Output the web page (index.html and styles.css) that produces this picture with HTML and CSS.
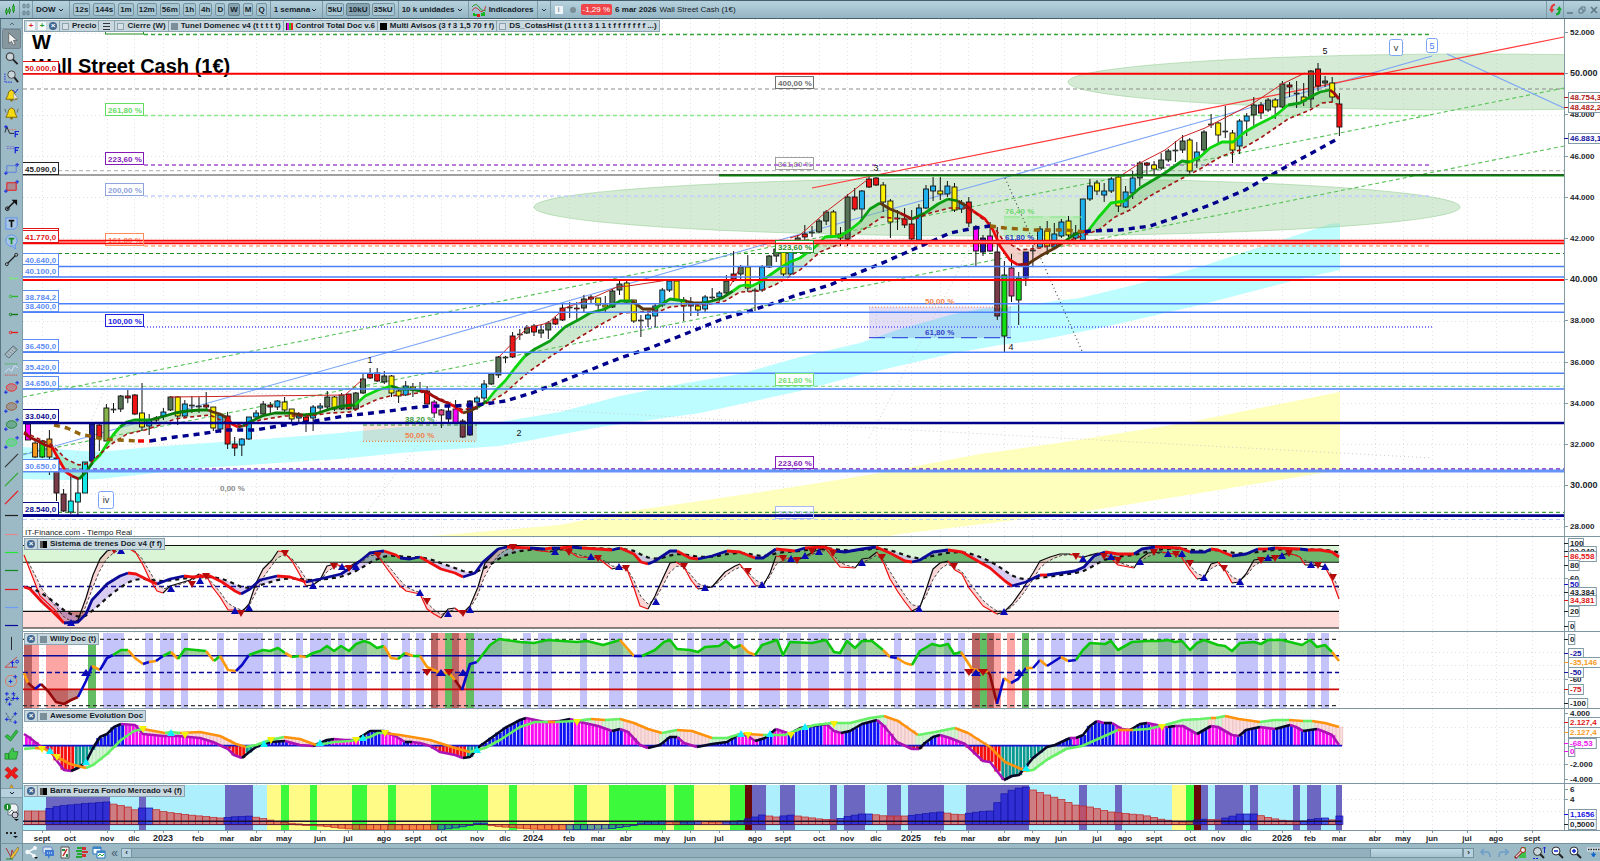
FILE: index.html
```html
<!DOCTYPE html>
<html lang="es">
<head>
<meta charset="utf-8">
<title>Wall Street Cash (1€)</title>
<link rel="stylesheet" href="styles.css">
</head>
<body>
<header class="toolbar">
  <button class="tool-icon" aria-label="Gráfico"><svg width="12" height="12" viewBox="0 0 12 12"><path d="M2.500 4v7M5.500 3v7M9.500 0v9" stroke="#17801b"/><path d="M1.500 6h2v3h-2zM4.500 5h2v3h-2zM8.500 2h2v5h-2z" fill="#3cb83f" stroke="#17801b" stroke-width=".5"/></svg></button>
  <button class="tool-icon grip" aria-label="Vincular"><svg width="8" height="13" viewBox="0 0 8 13"><g fill="none" stroke="#5d7683"><rect x="1" y="1" width="2" height="4" rx="1"/><rect x="5" y="1" width="2" height="4" rx="1"/><rect x="1" y="8" width="2" height="4" rx="1"/><rect x="5" y="8" width="2" height="4" rx="1"/></g></svg></button>
  <div class="group"><select class="pick w-symbol" aria-label="Valor"><option>DOW</option></select></div>
  <div class="group">
    <button class="tf">12s</button><button class="tf">144s</button><button class="tf">1m</button><button class="tf">12m</button><button class="tf">56m</button><button class="tf">1h</button><button class="tf">4h</button><button class="tf">D</button><button class="tf on">W</button><button class="tf">M</button><button class="tf">Q</button>
  </div>
  <div class="group"><select class="pick w-frame" aria-label="Periodo"><option>1 semana</option></select></div>
  <div class="group near"><button class="tf">5kU</button><button class="tf on">10kU</button><button class="tf">35kU</button></div>
  <div class="group"><select class="pick w-units" aria-label="Unidades"><option>10 k unidades</option></select></div>
  <div class="group"><button class="plain"><svg width="14" height="14" viewBox="0 0 14 14"><path d="M0 4q4-5 7 0t7 3" fill="none" stroke="#2a9a2f"/><path d="M0 8q3-6 7-1t7-4" fill="none" stroke="#c03a3a"/><path d="M1 13v-3h2v3M3 13v-2h2v2M9 13v-3h2v3M11 13v-4h2v4" fill="#12b51c"/><path d="M5 11h3v3H5z" fill="#d22"/></svg>Indicadores</button></div>
  <div class="group"><button class="plain" aria-label="Más indicadores"><svg width="6" height="4" viewBox="0 0 6 4"><path d="M1 1l2 2 2-2" fill="none" stroke="#234"/></svg></button></div>
  <div class="quote"><span class="info">i</span><span class="dot"></span><span class="change">-1,29 %</span><b>6 mar 2026</b><span>Wall Street Cash (1€)</span></div>
  <div class="window-tools">
    <button class="tool-icon sync" aria-label="Sincronizar"><svg width="13" height="13" viewBox="0 0 13 13"><path d="M6 1.500Q2 2 2.500 7" fill="none" stroke="#e53a3a" stroke-width="2.200"/><path d="M0 6h5.500L2.800 10z" fill="#e53a3a"/><path d="M7 11.500q4-.5 3.500-5.500" fill="none" stroke="#13a92b" stroke-width="2.200"/><path d="M7.500 7H13l-2.700-4z" fill="#13a92b"/></svg></button>
    <button class="win" aria-label="Minimizar"><svg width="8" height="8" viewBox="0 0 8 8"><path d="M1 7h6" stroke="#5c7683" stroke-width="1.500"/></svg></button>
    <button class="win" aria-label="Restaurar"><svg width="8" height="8" viewBox="0 0 8 8"><path d="M1 3h4v4H1zM3 3V1h4v4H5" fill="none" stroke="#5c7683"/></svg></button>
    <button class="win" aria-label="Cerrar"><svg width="8" height="8" viewBox="0 0 8 8"><path d="M1 1l6 6M7 1L1 7" stroke="#5c7683" stroke-width="1.500"/></svg></button>
  </div>
</header>

<div class="middle">
  <nav class="sidebar" aria-label="Herramientas de dibujo">
    <button class="side-head" aria-label="Subir"><svg width="6" height="4" viewBox="0 0 6 4"><path d="M1 3l2-2 2 2" fill="none" stroke="#567"/></svg></button>
    <div class="tools" id="tools"></div>
    <button class="side-more" aria-label="Bajar"><svg width="6" height="4" viewBox="0 0 6 4"><path d="M1 1l2 2 2-2" fill="none" stroke="#123"/></svg></button>
    <button class="side-doc" aria-label="Plantillas"><svg width="16" height="18" viewBox="0 0 16 18"><path d="M6 1h6l2 3v8H4V3z" fill="#eef2f4" stroke="#678"/><circle cx="3.500" cy="4" r="3.500" fill="#1d8b2d"/><path d="M3.500 2v4" stroke="#fff"/><path d="M5 10l3-3 3 3 3-3" fill="none" stroke="#788"/><circle cx="11" cy="12" r="3" fill="#ccd" stroke="#333"/><path d="M10 16h5l-2.500 2z" fill="#111"/></svg></button>
    <button class="side-dots" aria-label="Más"><svg width="14" height="8" viewBox="0 0 14 8"><path d="M1 2h2M5 2h2M9 2h2" stroke="#222" stroke-width="2"/><path d="M8 5h5l-2.500 2z" fill="#111"/></svg></button>
  </nav>

  <main class="charts">
    <section class="panel">
      <div class="legend">
        <span class="tab actions"><button class="mini red" aria-label="Bajar">+</button><button class="mini green" aria-label="Subir">+</button><button class="mini close" aria-label="Cerrar">×</button></span>
        <span class="tab"><i class="swatch hollow"></i>Precio</span>
        <span class="tab list"><i class="lines"></i></span>
        <span class="tab"><i class="swatch hollow"></i>Cierre (W)</span>
        <span class="tab"><i class="swatch slate"></i>Tunel Domenec v4 (t t t t t)</span>
        <span class="tab"><i class="swatch multi"></i>Control Total Doc v.6</span>
        <span class="tab"><i class="swatch black"></i>Multi Avisos (3 f 3 1,5 70 f f)</span>
        <span class="tab"><i class="swatch hollow"></i>DS_CotasHist (1 t t t 3 1 1 t f f f f f f f ...)</span>
      </div>
      <svg id="price" class="plot" viewBox="23 19 1577 518"></svg>
    </section>
    <section class="panel">
      <div class="legend"><span class="tab"><button class="mini close" aria-label="Cerrar">×</button></span><span class="tab"><i class="swatch half"></i>Sistema de trenes Doc v4 (f f)</span></div>
      <svg id="trains" class="plot" viewBox="23 537 1577 95"></svg>
    </section>
    <section class="panel">
      <div class="legend"><span class="tab"><button class="mini close" aria-label="Cerrar">×</button></span><span class="tab"><i class="swatch slate"></i>Willy Doc (t)</span></div>
      <svg id="willy" class="plot" viewBox="23 632 1577 77"></svg>
    </section>
    <section class="panel">
      <div class="legend"><span class="tab"><button class="mini close" aria-label="Cerrar">×</button></span><span class="tab"><i class="swatch slate"></i>Awesome Evolution Doc</span></div>
      <svg id="awesome" class="plot" viewBox="23 709 1577 75"></svg>
    </section>
    <section class="panel">
      <div class="legend"><span class="tab"><button class="mini close" aria-label="Cerrar">×</button></span><span class="tab"><i class="swatch half"></i>Barra Fuerza Fondo Mercado v4 (f)</span></div>
      <svg id="force" class="plot" viewBox="23 784 1577 47"></svg>
    </section>
    <svg id="months" class="plot" viewBox="23 831 1577 12"></svg>
  </main>
</div>

<footer class="bottom">
  <button class="corner" aria-label="Dibujar"><svg width="14" height="14" viewBox="0 0 14 14"><path d="M1 2l5 9 1-7 3 6" fill="none" stroke="#a33"/><path d="M13 1L6 10l-1 3 3-1 6-9z" fill="#f3c433" stroke="#654" stroke-width=".6"/><path d="M1 13h7" stroke="#2a8a2a"/></svg></button>
  <div class="shortcuts">
    <button aria-label="Compartir"><svg width="13" height="13" viewBox="0 0 13 13"><path d="M10 2L3 6l7 4" fill="none" stroke="#f4f8fa" stroke-width="1.500"/><circle cx="10" cy="2" r="2" fill="#f4f8fa"/><circle cx="2.500" cy="6" r="2.200" fill="#f4f8fa"/><circle cx="9" cy="10" r="2" fill="#f4f8fa"/><path d="M9 11h4l-2 2z" fill="#111"/></svg></button>
    <button aria-label="Mensajes"><svg width="13" height="13" viewBox="0 0 13 13"><rect x="1" y="1" width="9" height="6" rx="1" fill="#d7e4f2" stroke="#68c"/><path d="M3 4h9v6H8l-2 3v-3H3z" fill="#3e7ad3"/><path d="M5 7h1M7 7h1M9 7h1" stroke="#fff"/></svg></button>
    <button aria-label="Informe"><svg width="12" height="13" viewBox="0 0 12 13"><path d="M2 1h8v11H2z" fill="#f4f4f4" stroke="#555"/><path d="M4 10l4-7" stroke="#c22" stroke-width="1.500"/><path d="M3 3h3v2H3zM7 8h2v3H7z" fill="#284"/></svg></button>
    <button aria-label="Libro"><svg width="13" height="13" viewBox="0 0 13 13"><path d="M2 1h5v2H2zM1 4h6v2H1zM2 7h5v2H2zM1 10h6v2H1z" fill="#22a833"/><path d="M7 1h4v3H7zM7 5h6v2H7zM7 8h4v3H7z" fill="#cf3030"/></svg></button>
    <button aria-label="Ventanas"><svg width="14" height="13" viewBox="0 0 14 13"><path d="M1 1h8v7H1z" fill="#fff" stroke="#27b"/><path d="M5 5h8v7H5z" fill="#fff" stroke="#27b"/><path d="M5 5h8v2H5zM1 1h8v2H1z" fill="#3a83c8"/><path d="M6 10l2-2 2 2 2-2" fill="none" stroke="#2a3"/></svg></button>
    <button class="fold" aria-label="Plegar">«</button>
  </div>
  <button class="arrow" aria-label="Izquierda">‹</button>
  <div class="track"><div class="thumb"></div></div>
  <button class="arrow" aria-label="Derecha">›</button>
  <div class="view-tools">
    <button aria-label="Deshacer"><svg width="12" height="12" viewBox="0 0 12 12"><path d="M4 2L1 5l3 3M1 5h6q3 0 3 5" fill="none" stroke="#6f9fc6" stroke-width="1.600"/></svg></button>
    <button aria-label="Rehacer"><svg width="12" height="12" viewBox="0 0 12 12"><path d="M8 2l3 3-3 3M11 5H5q-3 0-3 5" fill="none" stroke="#6f9fc6" stroke-width="1.600"/></svg></button>
    <button aria-label="Ajustes"><svg width="13" height="13" viewBox="0 0 13 13"><path d="M7 1h5v11H5" fill="#3cc14a"/><path d="M1 12l7-7" stroke="#822" stroke-width="3"/><path d="M2 11l6-6" stroke="#f3d5d5" stroke-width="1.200"/><circle cx="9" cy="4" r="2.500" fill="#e8eef0" stroke="#a22"/></svg></button>
    <button aria-label="Ajustar zoom"><svg width="14" height="14" viewBox="0 0 14 14"><circle cx="5.500" cy="5.500" r="4" fill="#c9d6dc" stroke="#333"/><path d="M8 8l4 4" stroke="#222" stroke-width="2"/><path d="M12.500 1v6M11 2.500L12.500 1 14 2.500" fill="none" stroke="#12c"/><path d="M1 12.500h6" stroke="#12c" stroke-dasharray="2 1"/></svg></button>
    <button aria-label="Alejar"><svg width="13" height="13" viewBox="0 0 13 13"><circle cx="5" cy="5" r="4" fill="#f1f6ff" stroke="#333"/><path d="M8 8l4 4" stroke="#222" stroke-width="2"/><path d="M3 5h4" stroke="#12c" stroke-width="1.500"/></svg></button>
    <button aria-label="Acercar"><svg width="13" height="13" viewBox="0 0 13 13"><circle cx="5" cy="5" r="4" fill="#f1f6ff" stroke="#333"/><path d="M8 8l4 4" stroke="#222" stroke-width="2"/><path d="M3 5h4M5 3v4" stroke="#12c" stroke-width="1.500"/></svg></button>
    <button aria-label="Ir a fecha"><svg width="13" height="13" viewBox="0 0 13 13"><path d="M0 3.500h13" stroke="#d4e2e9" stroke-width="4"/><path d="M1 3.500h12" stroke="#222" stroke-width="1.500" stroke-dasharray="1.500 1"/><path d="M6.500 6v4M4.500 8h4L6.500 11z" stroke="#16c" fill="#16c"/></svg></button>
  </div>
</footer>
<script src="chart.js"></script>
</body>
</html>
```

FILE: styles.css
```css
* { box-sizing: border-box; }

body {
  margin: 0;
  display: flex;
  flex-direction: column;
  min-height: 100vh;
  background: #9cb9c6;
  color: #16222a;
  font: bold 8px/10px "Liberation Sans", Arial, sans-serif;
}

button, select {
  margin: 0;
  padding: 0;
  border: 0;
  background: none;
  color: inherit;
  font: inherit;
  border-radius: 0;
}

svg { display: block; flex: none; }

/* Top bar */
.toolbar {
  display: flex;
  align-items: stretch;
  height: 19px;
  border-top: 1px solid #44606f;
  border-bottom: 1px solid #44606f;
  background: linear-gradient(#b7d2de, #94b5c4);
  white-space: nowrap;
}
.tool-icon {
  display: flex;
  align-items: center;
  justify-content: center;
  width: 20px;
  border-right: 1px solid #7e9aa8;
}
.tool-icon.grip { width: 13px; }
.group {
  display: flex;
  align-items: center;
  gap: 3px;
  padding: 0 3px;
  border-right: 1px solid #7e9aa8;
}
.group.near { gap: 2px; }
.pick {
  appearance: none;
  height: 15px;
  background: url("data:image/svg+xml,%3Csvg xmlns='http://www.w3.org/2000/svg' width='6' height='4'%3E%3Cpath d='M1 1l2 2 2-2' fill='none' stroke='%23223'/%3E%3C/svg%3E") no-repeat right 2px center;
}
.w-symbol { width: 30px; }
.w-frame { width: 45px; }
.w-units { width: 63px; }
.tf {
  height: 13px;
  padding: 0 1px;
  border: 1px solid #7593a1;
  border-radius: 2px;
  background: #a9c6d3;
}
.tf.on { background: #86a3b1; border-color: #66818e; }
.plain { display: flex; align-items: center; gap: 3px; }
.quote {
  display: flex;
  align-items: center;
  gap: 3px;
  padding-left: 4px;
  flex: 1;
}
.quote span { font-weight: normal; }
.info {
  width: 8px;
  height: 8px;
  line-height: 8px;
  background: #eef4f7;
  color: #68808c;
  text-align: center;
}
.dot {
  width: 6px;
  height: 6px;
  margin: 0 2px 0 4px;
  border-radius: 50%;
  background: #7c8f98;
}
.quote .change {
  padding: 0 2px;
  border-radius: 2px;
  background: #f2454a;
  color: #fff;
  line-height: 11px;
}
.window-tools { display: flex; align-items: center; }
.sync { width: 18px; height: 17px; border-left: 1px solid #7e9aa8; }
.win { width: 12px; display: flex; justify-content: center; }

/* Drawing tools */
.middle { display: flex; align-items: stretch; }
.sidebar {
  display: flex;
  flex-direction: column;
  flex: none;
  width: 23px;
  border-left: 1px solid #5b7483;
  border-right: 1px solid #7f9cab;
  background: #9cb9c6;
}
.sidebar button {
  display: flex;
  align-items: center;
  justify-content: center;
}
.side-head { height: 10px; border-bottom: 1px solid #7f9cab; }
.tools {
  display: flex;
  flex-direction: column;
  flex: 1 1 0;
  min-height: 0;
  overflow: hidden;
}
.tools button { flex: 1 1 0; min-height: 0; }
.tools .active {
  margin: 0 1px;
  border: 1px solid #74828a;
  border-radius: 2px;
  background: #86979f;
}
.tools .cut {
  flex: none;
  height: 7px;
  align-items: flex-start;
  overflow: hidden;
}
.side-more {
  height: 10px;
  border-top: 1px solid #7f9cab;
  border-bottom: 1px solid #7f9cab;
  background: #b7d2de;
}
.side-doc { height: 28px; }
.side-dots { height: 17px; }

/* Chart panels */
.charts { flex: 1; min-width: 0; background: #fff; }
.panel { position: relative; }
.plot { width: 100%; height: auto; }
.plot text { font-size: 8px; }
.plot .title { font-size: 20px; fill: #000; }
.plot .year { font-size: 9px; }
.plot .plainText { font-weight: normal; }
.plot .count { font-weight: normal; font-size: 9px; }
.legend {
  position: absolute;
  top: 1px;
  left: 1px;
  display: flex;
  height: 12px;
  border: 1px solid #8aa3b0;
  background: #c9d8de;
  white-space: nowrap;
}
.tab {
  display: flex;
  align-items: center;
  gap: 3px;
  padding: 0 2px;
}
.tab.list { padding: 0 4px; }
.tab + .tab { border-left: 1px solid #8aa3b0; }
.mini {
  width: 8px;
  height: 8px;
  line-height: 8px;
  background: #f4f8fa;
}
.mini.red { color: #d22; }
.mini.green { color: #1a9a25; }
.mini.close { border-radius: 50%; background: #3f6590; color: #fff; }
.swatch { width: 7px; height: 7px; background: #7a8f99; }
.swatch.hollow { background: #d5e1e6; border: 1px solid #90a2ab; }
.swatch.black { background: #000; }
.swatch.half { background: linear-gradient(90deg, #555 40%, #fff 40% 50%, #000 50%); }
.swatch.multi { background: linear-gradient(90deg, #222 14%, #e0e 14% 42%, #2c2 42% 70%, #e22 70%); }
.lines { width: 7px; height: 7px; background: repeating-linear-gradient(#334 0 1px, transparent 1px 3px); }

/* Bottom bar */
.bottom {
  display: flex;
  align-items: center;
  height: 18px;
  border-top: 1px solid #7592a0;
  background: #9cb9c6;
}
.bottom button { display: flex; align-items: center; justify-content: center; }
.corner { width: 23px; height: 17px; border-right: 1px solid #7592a0; border-left: 1px solid #5b7483; }
.shortcuts { display: flex; align-items: center; gap: 4px; padding: 0 2px; }
.fold { width: 9px; font-size: 12px; color: #45606e; font-weight: normal; }
.arrow {
  width: 11px;
  height: 10px;
  border: 1px solid #7592a0;
  background: #b7d2de;
  line-height: 8px;
}
.track {
  flex: 1;
  display: flex;
  justify-content: flex-end;
  height: 10px;
  border: 1px solid #7592a0;
  border-width: 1px 0;
  background: #92b0bd;
}
.thumb { width: 7%; background: linear-gradient(#c0dae5, #a5c3d0); border: 1px solid #7592a0; border-width: 0 1px; }
.view-tools { display: flex; align-items: center; gap: 5px; padding-left: 6px; }
```

FILE: chart.js
```js
const X0 = 28, STEP = 7.127, LAST = 1339, RIGHT = 1564;
const barX = i => X0 + i * STEP;
const INK = '#1c262c';

const line = (x1, y1, x2, y2, stroke, w = 1, dash = '') =>
  `<line x1="${x1}" y1="${y1}" x2="${x2}" y2="${y2}" stroke="${stroke}" stroke-width="${w}"${dash ? ` stroke-dasharray="${dash}"` : ''}/>`;
const rect = (x, y, w, h, fill, extra = '') => `<rect x="${x}" y="${y}" width="${w}" height="${h}" fill="${fill}" ${extra}/>`;
const text = (x, y, s, fill = INK, cls = '', anchor = 'start') =>
  `<text x="${x}" y="${y}" fill="${fill}" class="${cls}" text-anchor="${anchor}">${s}</text>`;
const path = (pts, stroke, w = 1, dash = '') =>
  `<polyline points="${pts}" fill="none" stroke="${stroke}" stroke-width="${w}" stroke-linejoin="round"${dash ? ` stroke-dasharray="${dash}"` : ''}/>`;
const area = (pts, fill, extra = '') => `<polygon points="${pts}" fill="${fill}" ${extra}/>`;

/* "R 24,433 31,438 G 86,472": a letter sets the colour of the points after it */
function parse(src) {
  let c = '';
  const out = [];
  src.trim().split(/\s+/).forEach(tok => {
    if (/^[A-Za-z]$/.test(tok)) c = tok;
    else { const [x, y] = tok.split(',').map(Number); out.push({ x, y, c }); }
  });
  return out;
}
const join = pts => pts.map(p => p.x + ',' + p.y).join(' ');
function coloured(pts, palette, w, dash) {
  let out = '', run = [pts[0]], c = pts[0].c;
  for (let i = 1; i < pts.length; i++) {
    if (pts[i].c !== c) {
      out += path(join(run), palette[c], w, dash);
      run = [pts[i - 1]];
      c = pts[i].c;
    }
    run.push(pts[i]);
  }
  return out + path(join(run), palette[c], w, dash);
}
function at(pts, x) {
  if (x <= pts[0].x) return pts[0];
  for (let i = 1; i < pts.length; i++) {
    if (x <= pts[i].x) {
      const a = pts[i - 1], b = pts[i], t = (x - a.x) / (b.x - a.x);
      return { x, y: a.y + (b.y - a.y) * t, c: b.c };
    }
  }
  return { ...pts[pts.length - 1], x };
}
function lagged(pts, k) {
  let y = pts[0].y;
  const out = [];
  for (let i = 0; i < 185; i++) {
    const x = barX(i);
    y += (at(pts, x).y - y) * k;
    out.push({ x: +x.toFixed(1), y: +y.toFixed(1) });
  }
  return out;
}
const between = (a, b) => join(a) + ' ' + join([...b].reverse());
const triangles = (src, up, fill, r = 4) => src.trim().split(/\s+/).map(p => {
  const [x, y] = p.split(',').map(Number);
  return up ? area(`${x - r},${y + 3} ${x + r},${y + 3} ${x},${y - 4}`, fill)
            : area(`${x - r},${y - 3} ${x + r},${y - 3} ${x},${y + 4}`, fill);
}).join('');

const MONTHS = 'sept42 oct70 nov107 dic134 2023:163 feb198 mar227 abr256 may284 jun320 jul348 ago384 sept413 oct441 nov477 dic505 2024:533 feb569 mar598 abr626 may662 jun690 jul719 ago755 sept783 oct819 nov847 dic876 2025:911 feb940 mar968 abr1004 may1032 jun1061 jul1097 ago1125 sept1154 oct1190 nov1218 dic1246 2026:1282 feb1310 mar1339 abr1375 may1403 jun1432 jul1467 ago1496 sept1532'
  .split(' ').map(s => s.includes(':') ? s.split(':') : s.match(/([a-z]+)(\d+)/).slice(1)).map(([m, x]) => [m, +x]);

function grid(top, bottom, rows = []) {
  let s = rect(23, top, 1577, bottom - top, '#fff');
  MONTHS.forEach(([, x]) => { s += line(x + .5, top, x + .5, bottom, '#e2e2e2', 1, '1 3'); });
  rows.forEach(y => { s += line(23, y, RIGHT, y, '#e2e2e2', 1, '1 3'); });
  return s;
}
/* Right-hand scale: covers anything that runs over it, then ticks, values and boxed values */
function scale(top, bottom, ticks, boxes) {
  let s = rect(RIGHT, top, 36, bottom - top, '#fff') + line(RIGHT + .5, top, RIGHT + .5, bottom, '#8299a6', 1);
  ticks.forEach(([y, v, big]) => {
    s += line(RIGHT, y + .5, RIGHT + 4, y + .5, '#8299a6') + text(1570, y + 3, v, INK, big ? 'year' : '');
  });
  boxes.forEach(([y, v, c]) => {
    s += line(RIGHT, y + .5, RIGHT + 4, y + .5, c) +
      rect(1568.5, y - 4.5, v.length * 4.3 + 2, 10, '#fff', 'stroke="#8299a6"') + text(1570, y + 3, v, c);
  });
  return s + line(23, bottom - .5, 1600, bottom - .5, '#7e95a2');
}

/* ---------- Price ---------- */
const CANDLES = `423 424 440 440 m|441 443 457 458 o|440 441 457 458 g|430 439 457 475 o|457 458 493 501 w|489 494 511 512 w|475 501 512 514 c|479 493 502 515 c|462 462 493 493 c|424 424 461 462 n|424 425 437 451 r|404 408 441 441 l|403 409 410 413 k|395 396 409 412 k|390 396 398 403 r|394 395 414 415 r|383 413 427 431 y|414 420 426 435 b|416 418 420 422 y|408 412 416 420 b|396 397 410 411 k|396 397 416 425 y|400 404 416 417 b|396 405 406 413 k|397 406 406 413 k|392 405 407 411 r|407 407 428 431 y|415 415 429 433 b|412 416 444 449 r|437 444 448 456 r|438 439 445 456 b|417 417 439 440 b|410 413 417 418 b|401 404 414 417 k|402 405 407 413 r|400 401 407 410 b|397 402 410 412 y|409 409 419 422 y|412 416 418 422 b|415 417 421 432 r|405 407 418 431 b|403 406 408 414 b|391 397 407 410 k|396 397 409 411 y|393 395 409 410 k|394 394 409 410 r|392 393 409 411 k|374 379 393 394 k|368 374 378 379 r|368 373 381 382 r|371 376 382 384 k|375 376 393 397 y|389 391 396 403 y|381 386 395 396 b|383 387 390 397 y|382 390 391 392 k|386 391 404 404 r|400 402 413 418 m|409 410 415 428 p|403 411 419 422 n|400 409 423 424 m|419 421 437 438 w|400 401 435 436 n|396 398 402 410 b|380 384 398 404 b|374 374 384 385 k|356 357 375 378 k|356 357 358 363 k|332 336 357 358 r|329 334 335 340 k|325 328 333 334 k|324 326 332 336 r|325 330 333 338 k|321 323 330 339 k|316 319 324 325 r|304 308 320 321 r|302 307 308 318 k|302 308 309 320 r|295 299 308 313 k|295 297 299 304 r|298 298 305 312 y|296 305 307 313 y|289 291 307 308 k|281 284 290 295 k|280 283 302 304 y|300 300 321 323 y|315 320 321 337 k|313 315 319 327 b|304 306 316 327 b|288 290 305 307 b|279 281 290 292 b|279 281 300 301 y|297 300 306 321 y|297 303 306 316 b|302 306 310 316 y|295 297 309 312 b|288 297 298 302 k|291 293 297 301 b|275 281 293 295 k|251 274 279 282 r|265 267 274 279 k|255 267 288 292 y|288 290 291 311 k|265 267 290 292 b|255 256 267 268 k|245 249 256 262 k|250 252 274 276 y|247 250 274 275 b|235 238 248 252 k|225 234 237 244 r|226 232 233 237 k|219 221 232 233 k|210 212 221 225 k|210 212 236 237 y|227 234 238 246 y|194 197 239 246 k|188 197 209 211 r|190 191 209 221 b|177 179 187 188 r|177 178 185 186 r|182 185 202 212 y|199 201 222 238 y|210 218 219 230 k|208 219 225 228 r|210 224 239 243 r|204 208 240 244 b|185 189 208 209 b|177 186 191 201 b|177 191 194 200 y|181 186 194 197 b|183 187 210 212 y|200 203 209 213 b|197 202 223 227 r|225 227 251 266 m|235 238 252 256 n|222 236 251 252 m|227 252 316 320 w|261 275 336 352 g|254 268 296 302 p|272 278 300 325 g|252 252 278 286 n|245 250 251 266 k|226 229 247 247 b|221 231 246 255 y|223 234 247 248 b|219 222 236 238 b|216 221 235 237 y|225 233 238 240 b|199 199 240 240 b|179 186 199 201 b|180 183 191 195 y|183 191 195 202 b|177 179 191 193 b|176 177 206 212 y|186 192 207 208 b|171 178 193 199 b|161 163 178 186 k|162 163 165 176 r|161 165 169 175 y|153 160 168 170 k|149 151 160 162 k|141 150 151 162 k|135 141 150 153 k|138 140 171 173 y|142 152 160 168 b|130 132 150 153 k|114 124 125 128 k|122 123 135 145 y|106 131 132 138 k|130 133 150 163 y|119 121 146 154 b|113 116 121 136 b|97 105 115 126 k|102 105 113 119 r|98 100 110 112 k|98 100 107 119 y|81 84 107 108 k|82 85 87 97 r|81 93 94 108 k|83 97 101 106 y|70 71 99 108 k|63 69 86 91 r|76 81 83 87 k|77 83 97 102 y|93 104 127 136 r`
  .split('|').map(s => s.split(' '));
const CANDLE_FILL = { m: '#f0f', o: '#f59a1c', g: '#12dc12', w: '#7b3a47', c: '#17e8e8', n: '#1c1ca8', r: '#f01414', l: '#86b34a', k: '#567356', y: '#fbf100', b: '#1fb0ee', p: '#e04488' };

const ma = parse(`D 24,433 31,438 38,441 45,445 52,447 R 59,460 66,472 72,476 D 79,479 E 86,472 93,462 F 100,455 107,444 113,435 120,427 G 127,422 134,420 150,420 E 165,416 175,413 187,411 200,410 208,410 B 213,412 220,414 227,418 R 232,424 238,427 B 243,426 E 250,422 262,416 275,413 290,413 B 295,414 303,415 E 315,414 330,409 342,406 355,405 F 365,396 378,390 391,386 E 400,389 410,389 420,391 D 427,392 433,396 440,400 450,404 R 457,408 463,413 B 470,411 478,407 E 487,401 F 495,391 505,381 515,368 525,356 G 535,349 550,341 565,327 580,319 590,313 605,309 620,301 632,301 B 643,309 655,309 G 662,304 670,299 685,301 B 695,303 702,303 E 712,301 722,298 733,291 F 740,286 745,285 752,286 760,282 770,275 780,268 790,262 800,258 815,247 825,237 840,236 850,230 860,222 G 870,209 880,203 B 890,209 900,213 D 912,219 E 925,213 G 938,204 948,199 E 958,201 B 966,206 D 973,211 R 985,219 993,230 1000,246 1010,260 1018,265 D 1028,264 B 1034,260 1042,255 1055,248 1064,242 E 1072,236 1080,232 R 1088,231 F 1098,218 1111,203 1125,201 G 1140,188 1155,179 1165,173 1182,161 1190,162 F 1200,157 1210,148 1222,142 1233,142 1245,132 1257,125 1275,116 1288,105 G 1300,103 1312,96 1320,92 1330,90 D 1334,93 1339,99`);
const band = parse(`24,432 52,445 66,459 79,465 90,463 100,454 113,443 127,434 145,430 160,425 175,419 190,417 210,415 225,422 245,426 260,420 285,416 310,416 330,413 350,412 365,405 378,399 390,396 410,394 425,392 450,403 463,410 475,407 490,402 505,393 517,382 530,371 550,357 575,340 600,325 622,313 640,312 660,311 670,307 690,305 705,305 725,301 740,292 760,291 775,285 800,270 820,252 842,243 860,232 882,217 900,219 915,219 930,213 950,208 970,208 980,217 993,226 1003,240 1020,250 1040,248 1065,242 1090,233 1100,229 1115,217 1130,210 1150,196 1175,182 1200,169 1222,156 1240,150 1262,137 1288,119 1310,110 1322,103 1332,102 1339,105`);
const trend = parse(`B 54,425 67,428 80,434 103,439 118,440 138,441 R 150,441 N 175,437 200,434 225,430 255,430 285,425 315,421 345,416 372,413 397,410 410,408 430,406 455,406 485,404 505,401 532,393 560,382 590,370 620,358 650,348 675,338 700,328 725,318 750,311 780,301 800,294 830,285 860,272 880,264 905,253 930,242 950,233 975,228 990,226 B 1005,228 1035,230 1065,230 1085,232 N 1090,231 1120,230 1150,226 1180,216 1210,205 1245,190 1280,170 1310,154 1339,138`);
const LINE = { R: '#ee0808', D: '#9c0c0c', B: '#5b3510', E: '#087a08', F: '#0cd60c', G: '#0a9e12', N: '#00008c' };

function drawPrice() {
  let s = grid(19, 537, [33, 74, 115, 156, 197, 238, 280, 321, 362, 403, 444, 486, 527].map(y => y + .5));
  s += text(32, 49, 'W', '#000', 'title') + text(32, 73, 'Wall Street Cash (1€)', '#000', 'title');
  s += area('23,447 100,452 150,447 250,440 340,433 400,427 500,422 560,412 620,396 680,384 740,374 800,357 860,343 900,329 950,315 980,309 1040,303 1080,298 1130,286 1200,267 1260,247 1300,234 1330,224 1340,223 1340,270 1300,279 1200,305 1100,328 1040,340 1000,345 950,354 860,375 800,391 700,413 600,427 500,446 440,450 400,453 340,459 200,468 100,479 70,480 23,479', '#bdfdff');
  s += area('420,537 560,525 630,511 700,501 800,486 880,473 980,454 1065,442 1190,422 1340,392 1340,470 1200,493 1100,509 1000,522 900,534 885,537', '#ffffbd');
  const oval = 'fill="#a8d6a8" fill-opacity=".48" stroke="#8cc98c" stroke-opacity=".5"';
  s += `<ellipse cx="997" cy="207" rx="463" ry="29" ${oval}/><ellipse cx="1475" cy="82" rx="407" ry="28" ${oval}/>`;
  s += rect(869, 307, 142, 31, '#5a46c8', 'fill-opacity=".18"') + rect(363, 425, 114, 16, '#e88a5a', 'fill-opacity=".22"') + rect(1004, 216, 78, 24, '#7ae87a', 'fill-opacity=".25"');

  const H = (y, c, w, dash, x1 = 23, x2 = RIGHT) => line(x1, y, x2, y, c, w, dash);
  s += H(34.5, '#3ba33b', 1.4, '4 3', 144, 1432) + H(89, '#8b8b8b', 1.2, '4 3') + H(115.5, '#86e886', 1.4, '4 3', 144, 1432);
  s += H(165, '#a14fd0', 1.4, '4 3', 144, 1432) + H(170.7, '#b9b9b9', 1.2, '4 3') + H(196, '#c2d0ff', 1.4, '4 3', 144, 1432);
  s += H(246, '#ffa27c', 1.4, '4 3', 144, 1432) + H(253.5, '#1f8c1f', 1.2, '4 3') + H(327, '#5454ff', 1.4, '1 2', 144, 1432);
  s += H(386.3, '#8fe08f', 1.2, '4 3') + H(469, '#7a22c8', 1.6, '4 3') + H(512.3, '#3fa33f', 1.2, '4 3') + H(519.5, '#b9c6fb', 1.2, '4 3');
  s += line(23, 397, RIGHT, 88, '#58c158', 1.1, '4 3') + line(23, 454, RIGHT, 146, '#58c158', 1.1, '4 3');
  s += path('23,455 400,349 617,287 790,237 1007,177 1200,122 1432,56', '#7ba4f6', 1.1) + line(1447, 54, RIGHT, 108, '#7ba4f6', 1.1);
  s += line(812, 188, RIGHT, 37, '#ff3a3a', 1.2) + line(1005, 178, 1082, 351, '#444', 1.2, '1 3');
  s += path('110,385 800,424 1432,458', '#ccc', 1, '1 3') + path('62,490 105,388', '#ccc', 1, '1 3') + path('366,513 475,370', '#ccc', 1, '1 3') + path('869,438 950,287 1005,180', '#ccc', 1, '1 3');
  s += path('23,494 440,494', '#ccc', 1, '1 3');

  s += area(between(ma, band), '#7cc47c', 'fill-opacity=".38"');
  s += area('973,211 985,219 993,230 1000,246 1010,260 1018,265 1028,264 1042,255 1055,248 1040,248 1020,250 1003,240 993,226 980,217', '#ffc9c9', 'fill-opacity=".8"');
  CANDLES.forEach(([h, t, b, l, c], i) => {
    const x = +barX(i).toFixed(1);
    s += line(x, h, x, l, '#111', 1);
    s += rect(x - 2.5, t, 5, Math.max(b - t, 1), CANDLE_FILL[c], `stroke="#111" stroke-width="${b - t < 2 ? .6 : .9}"`);
  });
  s += coloured(ma, LINE, 2.8) + path(join(band), '#a31414', 1.6, '4 3');
  s += coloured(trend, { ...LINE, B: '#93640c' }, 3.4, '6 5');
  const hi = '#c22';
  s += path('170,397 345,395 363,379', hi) + path('499,357 527,328 548,323 565,308 590,299 617,287 628,286 668,280', hi) + path('730,286 741,266', hi) + path('790,238 800,235 827,211 867,180', hi) + path('1122,175 1140,163 1165,150 1182,137 1205,128 1252,104 1282,84 1305,73', hi);

  s += H(73.7, '#f00', 2) + H(175, '#444', 1.2);
  s += H(175.6, '#0a9410', 2, '', 719) + H(174.8, '#143a14', .9, '', 719);
  s += rect(58, 241, 1506, 3, '#ff8f8f') + H(240.500, '#f00', 1.4) + H(243.5, '#f00', 1.4) + H(280, '#f00', 1.8);
  [266.5, 277, 303.7, 312.3, 352.3, 373.3, 389].forEach(y => { s += H(y, '#4a80f8', 1.4); });
  s += H(423, '#00008c', 2.6) + H(471, '#6494f8', 3) + H(515.7, '#00008c', 2.8);

  s += line(869, 307, 1011, 307, '#f0824c', 1.2, '1 2') + line(869, 337.6, 1011, 337.6, '#3d55dc', 1.4, '16 7');
  s += line(363, 425, 477, 425, '#2c8c2c', 1, '4 3') + line(363, 441.3, 477, 441.3, '#f0824c', 1.2, '1 2') + line(1004, 217, 1082, 217, '#8ae88a', 1.2, '16 7');
  [[925, 303.5, '50,00 %', '#f5854f'], [925, 334.5, '61,80 %', '#3347c9'], [405, 421.5, '38,20 %', '#3a9a3a'], [405, 438, '50,00 %', '#ee8350'],
   [1005, 214, '76,40 %', '#6fd86f'], [1005, 239.5, '61,80 %', '#2a42c0'], [220, 491, '0,00 %', '#8b8b8b']].forEach(a => { s += text(...a); });

  const box = (x, w, bottom, v, c, h = 13) =>
    rect(x + .5, bottom - h + .5, w, h - 1, '#fff', `stroke="${c}"`) + text(x + 3, bottom - 3, v, c);
  [[34.5, '', '#1f8c1f'], [116, '261,80 %', '#62dd62'], [165, '223,60 %', '#8519b8'], [196, '200,00 %', '#8fa3dc'], [246, '161,80 %', '#ff8a5c'], [327, '100,00 %', '#2222dd']]
    .forEach(([y, v, c]) => { s += box(105, 38, y, v, c); });
  [[89, '400,00 %', '#6f6f6f'], [170, '361,80 %', '#a0a0a0'], [253, '323,60 %', '#2b8c2b'], [386, '261,80 %', '#72de72'], [469, '223,60 %', '#8519b8'], [519, '200,00 %', '#a9b8ee']]
    .forEach(([y, v, c]) => { s += box(775, 38, y, v, c); });
  s += line(105, 240.5, 143, 240.5, '#f00', 1.4) + line(105, 243.5, 143, 243.5, '#f00', 1.4);
  s += line(775, 165, 813, 165, '#a14fd0', 1.4, '4 3') + line(775, 515.7, 813, 515.7, '#00008c', 2.8) + line(775, 512.3, 813, 512.3, '#3fa33f', 1, '4 3') + line(775, 243.5, 813, 243.5, '#f00', 1.4);
  [[74, '50.000,0', '#e01515'], [175, '45.090,0', '#222'], [243, '41.770,0', '#e01515', 15], [266, '40.640,0', '#5c8df5'], [277, '40.100,0', '#5c8df5'], [312, '38.400,0', '#5c8df5'], [303, '38.784,2', '#5c8df5'], [352, '36.450,0', '#5c8df5'], [373, '35.420,0', '#5c8df5'], [389, '34.650,0', '#5c8df5'], [422, '33.040,0', '#0a0a8c'], [472, '30.650,0', '#5c8df5'], [515, '28.540,0', '#0a0a8c']]
    .forEach(([y, v, c, h]) => { s += box(22, 36, y, v, c, h); });
  s += line(23, 230.5, 58, 230.5, '#e01515');

  const note = (x, y, w, h, v, c) => rect(x, y, w, h, '#fff', 'rx="2" stroke="#7ba4f6"') + text(x + w / 2, y + h / 2 + 3, v, c, 'count', 'middle');
  s += note(98.5, 491.5, 15, 17, 'iv', '#333') + note(1389.5, 39.5, 13, 16, 'v', '#333') + note(1426.5, 38.5, 11, 14, '5', '#4a80f8');
  [[1325, 54, '5'], [876, 171, '3'], [370, 363, '1'], [519, 436, '2'], [1011, 350, '4']].forEach(([x, y, v]) => { s += text(x, y, v, '#111', 'count', 'middle'); });
  s += text(25, 535, 'IT-Finance.com - Tiempo Real', '#222', 'plainText');

  const ticks = [52, 50, 48, 46, 44, 42, 40, 38, 36, 34, 32, 30, 28].map((v, i) => [Math.round(32 + i * 41.2), v + '.000', v % 10 === 0]);
  s += scale(19, 537, ticks, [[97, '48.754,3', '#b01818'], [107, '48.482,2', '#b01818'], [138, '46.883,1', '#1515a0']]);
  document.getElementById('price').innerHTML = s;
}

/* ---------- Sistema de trenes ---------- */
function drawTrains() {
  const fast = parse(`R 24,555 40,596 55,610 64,623 71,624 K 78,620 86,598 93,575 100,559 107,551 120,547 130,549 R 136,553 143,565 150,580 157,591 163,593 K 170,586 180,583 190,580 199,574 R 207,577 213,588 220,597 228,610 235,610 241,613 K 249,604 256,583 263,569 272,560 278,551 R 284,552 292,561 300,575 306,586 K 313,585 320,580 327,566 335,564 R 341,566 349,567 K 355,563 363,559 370,552 R 378,556 388,570 400,586 406,591 420,594 427,609 434,614 441,618 K 448,609 455,608 R 462,614 K 470,606 478,587 485,563 500,548 512,546 R 525,548 540,551 550,552 K 560,549 R 570,552 578,557 598,558 612,569 K 620,567 R 627,569 634,588 640,606 648,609 K 655,596 663,578 670,563 676,562 R 684,567 691,580 698,589 K 712,587 725,572 735,566 740,564 R 748,575 756,586 K 763,586 770,573 776,556 R 785,558 800,559 K 815,551 826,549 R 833,558 840,567 855,568 K 862,559 869,558 877,552 R 884,564 890,579 898,592 905,602 912,611 K 920,607 926,590 933,569 940,563 948,561 R 955,570 962,574 969,588 983,606 997,614 K 1004,612 1012,604 1022,590 1033,573 1040,561 1050,557 1060,554 1070,554 R 1082,558 K 1090,555 1098,553 R 1110,557 1118,565 1134,568 K 1140,559 1148,553 1162,552 R 1180,555 1190,570 1197,579 K 1204,578 1211,564 1218,562 R 1225,570 1232,583 K 1239,582 1246,574 1254,560 1275,557 1289,553 R 1300,557 1305,565 K 1312,565 1325,567 R 1332,580 1339,599`);
  const slow = parse(`R 24,587 30,589 42,602 52,611 64,623 N 78,622 86,614 92,600 107,584 120,576 128,573 R 136,574 150,581 157,584 N 170,579 184,576 R 192,577 210,576 222,582 235,591 241,594 N 250,589 260,580 277,576 R 290,577 306,582 N 320,579 341,574 355,565 370,553 384,551 R 396,555 400,558 N 410,559 420,557 R 434,565 441,569 455,573 463,577 N 475,573 483,562 498,549 507,547 R 530,548 N 545,549 R 552,548 N 560,548 R 572,547 N 582,548 R 598,549 612,550 N 620,548 R 634,554 641,562 648,564 N 655,561 670,551 677,551 R 690,558 698,559 N 712,556 727,551 R 740,552 755,558 N 763,558 776,549 R 795,551 N 805,548 R 825,547 835,551 N 845,552 862,549 876,547 R 890,553 905,561 912,562 N 920,560 933,552 948,550 R 962,552 976,560 990,568 1005,581 1012,586 N 1026,582 1040,575 R 1047,575 N 1075,571 1084,567 1094,556 1105,552 R 1118,554 1134,554 N 1142,549 1155,547 R 1180,548 1190,552 N 1205,552 1211,549 R 1218,550 1232,556 N 1246,554 1258,549 R 1268,549 N 1275,548 R 1300,549 N 1308,550 R 1320,550 1332,552 1339,557`);
  const lagFast = lagged(fast, .62), lagSlow = lagged(slow, .32);
  const pal = { R: '#ee1010', K: '#0a0a0a', N: '#0a0a96' };
  let s = grid(537, 632, [578.5, 595.5]);
  s += rect(23, 545.5, LAST - 23, 17, '#d9f5d6') + rect(23, 611, LAST - 23, 17, '#fedcda');
  s += '<clipPath id="high"><rect x="23" y="545" width="1316" height="17"/></clipPath><clipPath id="low"><rect x="23" y="611" width="100" height="17"/></clipPath>';
  s += area(join(slow) + ' 1339,562 470,562 24,562', '#6fb76f', 'clip-path="url(#high)" fill-rule="nonzero"');
  s += area('24,611 ' + join(slow.filter(p => p.x < 100)) + ' 100,611', '#c06a6a', 'clip-path="url(#low)" fill-opacity=".8"');
  s += area(between(slow, lagSlow), '#b39be6', 'fill-opacity=".5"') + area(between(fast, lagFast), '#f3a3a3', 'fill-opacity=".45"');
  [545.5, 562.3, 611.4, 628].forEach(y => { s += line(23, y, LAST, y, '#111', 1.1); });
  s += line(23, 586.5, LAST, 586.5, '#0a0a96', 1.5, '5 3');
  s += path(join(lagFast), '#333', .9, '3 2') + coloured(fast, pal, 1.2) + path(join(lagSlow), '#111', 2.2, '4 4') + coloured(slow, pal, 2.8);
  s += triangles('121,551 71,623 171,589 200,581 235,611 249,608 313,586 342,567 356,567 420,593 448,614 470,610 555,552 591,557 619,567 656,602 705,588 762,585 791,559 805,556 819,552 862,563 919,609 1004,612 1083,559 1111,557 1140,562 1168,554 1182,554 1204,578 1240,582 1268,558 1282,556 1311,565 1325,567', true, '#0a0ab4');
  s += triangles('114,550 192,584 206,576 241,613 285,553 334,566 349,568 378,555 427,601 463,613 513,547 569,552 598,558 626,568 684,566 748,571 783,558 797,560 812,551 833,553 882,557 954,566 1076,556 1104,556 1118,560 1154,552 1176,554 1190,563 1224,568 1261,560 1275,558 1289,553 1318,565 1333,577', false, '#b40a0a');
  s += scale(537, 632, [[578, '60']], [[543, '100', INK], [551, '92,949', INK], [556, '86,558', '#e01515'], [565, '80', INK], [584, '50', '#1515c0'], [592, '43,384', INK], [600, '34,381', '#e01515'], [611, '20', INK], [626, '0', INK]]);
  document.getElementById('trains').innerHTML = s;
}

/* ---------- Willy ---------- */
function drawWilly() {
  const w = parse(`O 24,673 28,683 D 35,689 B 41,684 D 48,691 56,702 64,704 71,700 78,697 B 86,681 92,666 O 100,670 B 107,658 113,655 G 121,650 128,650 O 135,658 143,664 B 149,662 O 156,661 B 163,656 G 171,652 O 178,659 G 185,649 206,651 O 214,661 G 220,656 O 228,670 236,671 B 242,665 249,655 G 263,650 270,651 278,648 285,653 O 292,657 G 299,656 O 306,657 G 313,653 320,651 327,646 334,651 341,646 349,651 356,644 364,641 370,643 377,648 384,646 O 391,658 398,659 G 405,653 O 413,656 G 420,656 O 427,667 441,673 449,673 455,680 D 462,690 B 470,664 477,662 G 490,645 499,639 520,642 534,643 548,640 577,642 587,641 603,645 620,640 O 634,656 B 642,656 G 655,650 664,642 670,640 677,649 690,650 698,652 705,647 719,646 726,641 734,648 741,645 O 748,652 755,655 G 762,645 777,640 783,655 790,642 812,643 826,640 834,652 840,653 847,641 855,648 862,641 872,641 883,650 O 890,657 B 897,658 O 905,663 912,665 G 920,651 932,644 940,646 948,644 954,654 961,652 O 972,669 988,672 D 990,675 997,704 B 1004,678 O 1011,683 B 1018,679 1026,668 O 1033,668 B 1040,660 O 1047,666 B 1061,657 O 1068,661 B 1076,660 G 1083,650 1090,643 1105,644 1111,641 1118,650 1132,642 1147,641 1160,641 1168,640 1175,642 1182,641 1190,650 1197,643 1204,640 1218,645 1225,646 1232,651 1240,643 1254,642 1261,644 1268,640 1282,640 1302,645 1310,640 1317,647 1325,645 1332,652 O 1339,661`);
  let s = grid(632, 709, [652.5, 665.5, 679.5, 692.5]);
  const stripes = {
    '#c4c4fb': '103-124 145-153 160-174 181-188 217-224 238-263 274-281 296-303 310-331 338-345 352-367 381-388 402-410 416-424 474-502 523-531 538-552 580-587 609-623 637-673 687-694 701-730 737-744 759-780 787-801 808-829 844-851 858-866 894-901 915-936 944-951 958-965 1037-1044 1051-1065 1072-1093 1100-1115 1122-1143 1158-1172 1179-1186 1193-1208 1236-1258 1264-1272 1279-1286 1307-1315 1321-1329',
    '#fba5a5': '32-39 46-68 438-445 459-466 994-1001 1007-1015',
    '#bb6464': '24-32 431-438 452-459 972-980 987-994',
    '#63bd63': '88-96 445-452 466-474 980-987 1022-1029'
  };
  for (const c in stripes) stripes[c].split(' ').forEach(r => { const [a, b] = r.split('-'); s += rect(a, 633, b - a, 75, c); });
  s += '<clipPath id="over"><rect x="23" y="633" width="1316" height="22"/></clipPath><clipPath id="under"><rect x="23" y="689" width="1316" height="20"/></clipPath>';
  s += area('24,655 ' + join(w) + ' 1339,655', '#4aab3c', 'fill-opacity=".5" clip-path="url(#over)"') + area('24,689 ' + join(w) + ' 1339,689', '#903030', 'fill-opacity=".55" clip-path="url(#under)"');
  s += line(23, 639.4, LAST, 639.4, '#333', 1.2, '4 3') + line(23, 705.7, LAST, 705.7, '#333', 1.2, '4 3') + line(23, 672.5, LAST, 672.5, '#0a0a96', 1.4, '5 3');
  s += line(23, 655.7, LAST, 655.7, '#0a0a96', 1.6) + line(23, 689.4, LAST, 689.4, '#cc0808', 1.6);
  s += coloured(w, { O: '#ff9a0a', D: '#930808', B: '#0a0ac8', G: '#0cc80c' }, 2.6);
  s += triangles('86,673 441,673 463,673 976,673 1019,673', true, '#0a0ab4', 5) + triangles('427,672 449,672 969,672 983,672', false, '#b40a0a', 5);
  s += scale(632, 709, [[679, '-60']], [[639, '0', INK], [653, '-25', '#1515a0'], [662, '-35,146', '#f59a1c'], [672, '-50', '#1515a0'], [689, '-75', '#d01515'], [703, '-100', INK]]);
  document.getElementById('willy').innerHTML = s;
}

/* ---------- Awesome ---------- */
function drawAwesome() {
  const ao = parse(`P 24,734 30,738 40,746 50,750 57,761 64,770 71,771 K 78,768 86,762 93,748 100,737 107,734 114,727 121,724 P 135,725 143,734 163,736 178,736 200,738 213,742 228,749 234,755 242,758 K 248,753 256,747 270,742 285,741 P 300,745 313,746 K 327,740 334,739 P 345,740 356,740 K 370,731 384,731 P 395,736 405,742 K 412,742 P 420,743 430,746 440,752 455,755 463,758 K 470,757 480,746 505,728 520,720 526,718 P 545,722 560,721 K 570,719 P 580,722 598,726 612,731 K 620,729 P 628,732 640,745 648,748 K 660,745 670,737 677,737 P 684,743 697,747 K 712,744 727,742 740,734 P 748,736 755,741 K 765,738 776,729 P 790,734 K 800,728 826,724 P 834,731 841,733 K 850,731 862,724 877,720 P 884,726 897,742 912,749 919,749 K 925,743 933,737 940,735 P 950,738 965,744 983,761 990,762 1004,780 K 1012,776 1019,775 1033,758 1047,747 1055,745 1070,738 P 1076,738 K 1083,735 1090,726 1097,721 P 1104,723 K 1112,723 P 1122,729 1130,730 K 1140,724 1147,723 P 1157,725 1168,727 K 1175,726 P 1183,726 1197,734 K 1211,726 P 1218,727 1232,735 1239,736 K 1246,730 1260,727 P 1275,729 K 1290,725 P 1296,727 1303,731 K 1317,729 P 1325,732 1332,735 1339,745`);
  const sig = parse(`G 24,749 35,748 O 45,749 57,757 70,764 86,768 G 93,765 107,754 121,740 134,731 143,729 O 165,733 G 171,732 180,733 O 200,732 220,736 236,744 246,747 G 256,745 270,740 284,737 O 300,739 316,745 G 335,742 350,741 370,737 378,733 384,733 O 400,735 430,740 455,748 470,752 G 485,748 500,740 520,727 535,722 548,722 O 555,722 G 575,721 591,719 O 605,720 G 620,719 O 634,723 648,729 662,733 G 677,730 O 692,731 712,738 G 727,738 740,734 O 748,734 763,735 G 785,735 800,729 815,725 833,723 850,723 870,718 884,716 O 898,721 918,735 G 935,732 955,728 O 968,733 990,747 1005,762 1026,771 G 1033,770 1048,759 1066,749 1082,746 1098,739 1118,730 O 1133,730 G 1148,729 1165,725 1183,720 1200,719 1211,718 O 1216,718 G 1225,716 O 1239,719 1260,722 G 1275,720 1289,720 O 1303,721 G 1312,721 O 1325,723 1339,727`);
  let s = grid(709, 784, [727.5, 764.5]);
  for (let i = 0; i < 185; i++) {
    const x = +barX(i).toFixed(1), a = at(ao, x), g = at(sig, x), neg = a.y > 745.5;
    const c = neg ? (a.c === 'P' ? '#f80d0d' : '#0b9a92') : (a.c === 'P' ? '#fa0af0' : '#1010f4');
    [-3, .5].forEach(d => {
      s += rect(x + d, Math.min(a.y, g.y), 3, Math.abs(a.y - g.y), g.c === 'O' ? '#fbdcdc' : '#d3f5d3', `stroke="${g.c === 'O' ? '#e0a8a8' : '#a8d8a8'}" stroke-width=".4"`);
      s += rect(x + d, Math.min(a.y, 745.5), 2.800, Math.abs(a.y - 745.5), c);
    });
  }
  s += line(23, 745.7, 1342, 745.7, '#1515c8', 1.8);
  s += coloured(ao, { P: '#ab12b4', K: '#070728' }, 2.6) + coloured(sig, { G: '#66f066', O: '#ff920c' }, 2.6);
  s += triangles('50,751 86,762 171,733 264,744 320,743 363,738 477,750 741,734 770,734 805,727 1026,768', true, '#0ff0ff') + triangles('42,749 57,757 143,729 185,735 271,740 356,740 385,733 577,722 748,735 791,735 834,724 1162,727', false, '#f4f00a');
  s += scale(709, 784, [[713, '4.000'], [764, '-2.000'], [779, '-4.000']], [[722, '2.127,4', '#e01515'], [732, '2.127,4', '#f59a1c'], [743, '-68,53', '#ee12ee'], [751, '0', '#ee12ee']]);
  document.getElementById('awesome').innerHTML = s;
}

/* ---------- Barra de fuerza ---------- */
function drawForce() {
  const f = parse(`24,811 45,811 50,808 60,806 80,804 107,802 113,804 128,807 134,810 142,808 150,808 165,812 190,815 220,818 225,818 230,817 250,816 265,819 280,822 300,824 320,826 350,829 384,830 440,830 462,827 475,823 485,823 492,826 530,829 560,830 610,829 630,826 640,823 660,821 680,823 700,821 715,823 740,821 755,817 762,815 776,817 790,815 805,817 820,819 835,820 845,817 860,814 870,814 885,816 905,816 915,815 940,812 960,815 970,813 985,811 991,811 997,803 1004,794 1012,790 1019,788 1026,787 1033,790 1047,795 1060,799 1075,805 1090,807 1111,812 1130,814 1143,815 1160,819 1180,822 1190,822 1200,819 1218,820 1240,814 1255,814 1262,816 1280,820 1300,822 1312,819 1325,818 1332,820 1339,816`);
  const pal = { c: '#adeffd', p: '#6c68c2', y: '#fffb86', g: '#3cf93c', m: '#680808' };
  let s = grid(784, 831, [799.5, 811.5]), from = 23;
  'c46 p110 c139 p146 c225 p253 c267 y281 g289 y310 g317 y352 g367 y388 g396 y431 g488 y509 g517 y574 g587 y609 g666 y674 g694 y730 g745 m752 p766 c780 p795 c830 p837 c844 p865 c887 p901 c908 p944 c966 p1029 c1079 p1087 c1115 p1122 c1172 y1186 g1194 m1201 p1208 c1215 p1243 c1250 p1258 c1293 p1300 c1307 p1321 c1336 p1342'
    .split(' ').forEach(t => { const x = +t.slice(1); s += rect(from, 785, x - from, 45, pal[t[0]]); from = x; });
  let prev = at(f, barX(0)).y, up = false;
  for (let i = 0; i < 185; i++) {
    const x = barX(i), y = at(f, x).y, neg = y > 824.5;
    if (Math.abs(y - prev) > .01) up = y < prev;
    const c = neg ? (up ? '#1c7c90' : '#f04c20') : (up ? '#1414dc' : '#dc4848');
    s += rect((x - 3.5).toFixed(1), Math.min(y, 824.5).toFixed(1), 7, Math.max(Math.abs(y - 824.5), 1).toFixed(1), c, `fill-opacity=".68" stroke="${up ? '#1414a8' : '#c02626'}" stroke-width=".7"`);
    prev = y;
  }
  s += line(23, 821.3, 1342, 821.3, '#201030', 1.4) + line(23, 824.6, 1342, 824.6, '#501038', .8);
  s += scale(784, 831, [[789, '6'], [799, '4']], [[814, '1,1656', '#1515dd'], [824, '0,5000', INK]]);
  document.getElementById('force').innerHTML = s;
}

function drawMonths() {
  let s = rect(23, 831, 1577, 12, '#fff');
  MONTHS.forEach(([m, x]) => { s += line(x + .5, 831, x + .5, 833, '#7e95a2') + text(x, 841, m, INK, /\d/.test(m) ? 'year' : '', 'middle'); });
  document.getElementById('months').innerHTML = s;
}

/* ---------- Drawing tools ---------- */
const hline = c => `<path d="M1 8h14" stroke="${c}" stroke-width="1.300"/>`;
const ray = c => `<circle cx="7" cy="8" r="1.300" fill="none" stroke="${c}"/><path d="M8 8h7" stroke="${c}" stroke-width="1.400"/>`;
const diag = c => `<path d="M1 15L15 1" stroke="${c}" stroke-width="1.200"/>`;
const plus = (x, y) => `<path d="M${x - 2} ${y}h4M${x} ${y - 2}v4" stroke="#12d"/>`;
const oval = c => `<ellipse cx="8" cy="8" rx="5.500" ry="4" fill="${c}" fill-opacity=".35" stroke="${c}"/>${plus(2, 13)}${plus(14, 3)}`;
const bell = '<path d="M8 2q-4 1-4 6l-2 4h12l-2-4q0-5-4-6z" fill="#f5d911" stroke="#7d6a10"/><circle cx="8" cy="13" r="1.300" fill="#7d6a10"/>';
const dots = (a) => a.map(([x, y]) => plus(x, y)).join('');
const TOOLS = [
  ['Cursor', '<path d="M5 1v11l3-2 2 4 2-1-2-4h4z" fill="#f4f4f4" stroke="#555" stroke-width=".8"/>'],
  ['Lupa', '<circle cx="6.500" cy="6" r="4" fill="#c8d6dc" stroke="#444" stroke-width="1.300"/><path d="M9.500 9l5 5" stroke="#222" stroke-width="2"/>'],
  ['Lupa de zona', '<path d="M1 5v9h8" fill="none" stroke="#12d" stroke-dasharray="1.500 1"/><circle cx="8" cy="6" r="4" fill="#c8d6dc" stroke="#444"/><path d="M11 9l4 5" stroke="#222" stroke-width="2"/>'],
  ['Alerta', bell + '<path d="M9 2l3 3 3-4" fill="none" stroke="#12d"/><path d="M10 5l5 6-3 0-1 3z" fill="#eee" stroke="#777" stroke-width=".5"/>'],
  ['Alertas', bell + '<path d="M1 3l1 4M15 3l-1 4" stroke="#666"/>'],
  ['Fibonacci', '<path d="M1 9l2-6 3 7h5" fill="none" stroke="#222"/><path d="M5 6h9" stroke="#d67a6a" stroke-dasharray="2 1"/><path d="M12 14V8h4M12 11h3" fill="none" stroke="#12d" stroke-width="1.300"/>' + plus(2, 3)],
  ['Retroceso', '<path d="M3 5h9M3 7h8" stroke="#7a70c8" stroke-dasharray="2 1"/><path d="M12 12V6h4M12 9h3" fill="none" stroke="#12d" stroke-width="1.300"/>'],
  ['Rectángulo', '<path d="M3 5h10v7H3z" fill="none" stroke="#5a7fe0"/>' + plus(2, 13) + plus(14, 4)],
  ['Rectángulo rojo', '<path d="M3 4h10v8H3z" fill="#a98c94" stroke="#e11"/>' + plus(2, 13) + plus(14, 3)],
  ['Flecha', '<path d="M3 13l8-8" stroke="#111" stroke-width="1.600"/><circle cx="3.500" cy="12.500" r="2" fill="none" stroke="#111"/><path d="M8 3h6v6z" fill="#111"/>'],
  ['Texto', '<path d="M2 2h12v9l-3 3H2z" fill="#a9c7e4" stroke="#5c8ff0"/><path d="M5 5h6M8 5v7" stroke="#111" stroke-width="1.800"/>'],
  ['Comentario', '<circle cx="8" cy="7" r="6" fill="#a9c7e4" stroke="#5c8ff0"/><path d="M9 13l3 3v-4" fill="#a9c7e4" stroke="#5c8ff0"/><path d="M5 5h6M8 5v6" stroke="#178a25" stroke-width="1.800"/>'],
  ['Segmento', '<path d="M4 12l8-8" stroke="#222" stroke-width="1.300"/><circle cx="3" cy="13" r="1.600" fill="none" stroke="#222"/><circle cx="13" cy="3" r="1.600" fill="none" stroke="#222"/>'],
  ['Rayo claro', ray('#7ce87c')], ['Rayo verde', ray('#2eb52e')], ['Rayo oscuro', ray('#0b7a0b')], ['Rayo rojo', ray('#e81818')],
  ['Regla', '<path d="M1 11l9-9 4 4-9 9z" fill="#aebfc7" stroke="#4b5a62"/><path d="M4 10l2 2M6 8l2 2M8 6l2 2M10 4l2 2" stroke="#4b5a62" stroke-width=".7"/>'],
  ['Regresión', '<path d="M1 2h14" stroke="#2a2" stroke-dasharray="1 1"/><path d="M1 14h14" stroke="#d33" stroke-dasharray="1 1"/><path d="M1 11l4-4 3 3 3-6 4 2" fill="none" stroke="#dbe4ff"/>'],
  ['Elipse roja', oval('#e83030')], ['Elipse marrón', oval('#9a5a3a')], ['Elipse verde', oval('#1e8a30')], ['Elipse clara', oval('#30e850')],
  ['Recta', diag('#333')], ['Recta verde', diag('#25a825')], ['Recta roja', diag('#f01010')],
  ['Horizontal', hline('#222')], ['Horizontal rosa', hline('#e08d8d')], ['Horizontal clara', hline('#20e830')], ['Horizontal verde', hline('#148a1c')], ['Horizontal roja', hline('#e81818')], ['Horizontal azul', hline('#6a9cf2')], ['Horizontal marino', hline('#0a0a96')],
  ['Vertical', '<path d="M8 1v14" stroke="#222"/>'],
  ['Ángulo', '<path d="M14 2L1 13h13" fill="none" stroke="#d04848"/><path d="M8 8q2 2 1 5" fill="none" stroke="#12d"/>' + dots([[9, 8]]) + '<circle cx="14" cy="7" r="1.500" fill="none" stroke="#12d"/>'],
  ['Ciclos', '<circle cx="7.500" cy="8.500" r="6" fill="none" stroke="#d97a5e"/>' + dots([[7, 9], [12, 4]])],
  ['Ondas 1-5', '<path d="M2 13l3-7 3 5 4-8" fill="none" stroke="#234" stroke-dasharray="1 1"/>' + dots([[3, 3], [10, 3], [3, 9], [10, 8], [6, 14], [14, 8]])],
  ['Ondas abc', '<path d="M2 3l6 10M6 12l5-7" stroke="#234" stroke-dasharray="1 1"/>' + dots([[12, 4], [3, 10], [12, 13]])],
  ['Marca', '<path d="M1 9l3-2 3 3 6-8 2 2-8 10z" fill="#32c040" stroke="#177a22" stroke-width=".7"/>'],
  ['Pulgar', '<path d="M1 8h4v6H1zM5 8l4-6q2 0 1 4h5l-2 8H5z" fill="#3ec54a" stroke="#177a22" stroke-width=".7"/>'],
  ['Borrar', '<path d="M4 2l4 4 4-4 3 3-4 3.500L15 12l-3 3-4-4-4 4-3-3 4-3.500L1 5z" fill="#ee1818" stroke="#a00" stroke-width=".5"/>'],
  ['Aviso', '<path d="M8 4l5 10H3z" fill="#f2b12c" stroke="#9a6a10" stroke-width=".7"/>', 'cut']
];
document.getElementById('tools').innerHTML = TOOLS.map(([name, body, cls], i) =>
  `<button aria-label="${name}" class="${i ? cls || 'tool' : 'active'}"><svg width="15" height="15" viewBox="0 0 16 16">${body}</svg></button>`).join('');

drawPrice();
drawTrains();
drawWilly();
drawAwesome();
drawForce();
drawMonths();
```
